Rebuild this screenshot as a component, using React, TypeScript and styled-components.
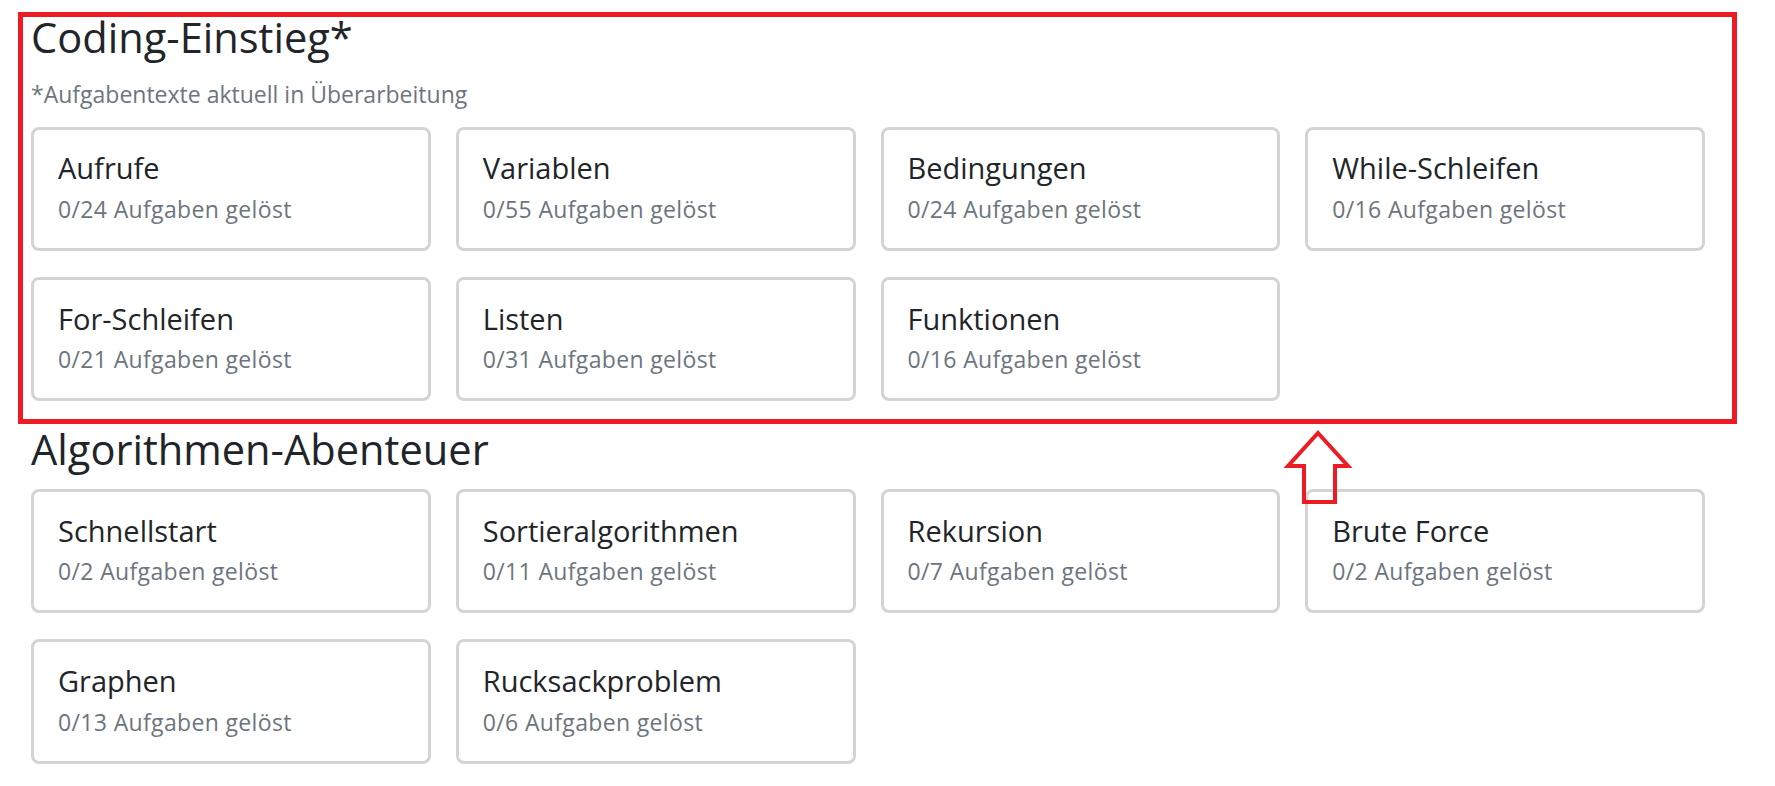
import React from "react";
import styled, { createGlobalStyle } from "styled-components";

const GlobalStyle = createGlobalStyle`
  html, body {
    margin: 0;
    padding: 0;
    background: #ffffff;
  }
  body {
    font-family: "Open Sans", "Noto Sans", "Liberation Sans", sans-serif;
    color: #212529;
  }
  * { box-sizing: border-box; }
`;

const Page = styled.div`
  position: relative;
  padding: 12.5px 70px 24px 31px;
`;

const Section = styled.section<{ $spaced?: boolean }>`
  margin-top: ${(p) => (p.$spaced ? "23.5px" : "0")};
`;

const Heading = styled.h2`
  margin: 0 0 15px;
  font-size: 41.6px;
  font-weight: 400;
  line-height: 49.2px;
  color: #212529;
`;

const Note = styled.p`
  margin: 0 0 15.5px;
  font-size: 23px;
  line-height: 1.5;
  color: #6c757d;
`;

const Grid = styled.div`
  display: grid;
  grid-template-columns: repeat(4, 1fr);
  column-gap: 25px;
  row-gap: 26px;
  width: 1674px;
`;

const Card = styled.a`
  display: flex;
  flex-direction: column;
  gap: 6px;
  padding: 21.5px 24px;
  border: 3px solid #d4d4d4;
  border-radius: 8px;
  text-decoration: none;
  background: #fff;
`;

const CardTitle = styled.div`
  font-size: 29px;
  line-height: 1.2;
  color: #212529;
`;

const CardMeta = styled.div`
  font-size: 23px;
  letter-spacing: 0.35px;
  line-height: 1.5;
  color: #6c757d;
`;

const Highlight = styled.div`
  position: absolute;
  left: 18px;
  top: 12px;
  width: 1719px;
  height: 412px;
  border: 5px solid #ed1c24;
  pointer-events: none;
`;

const ArrowMark = styled.svg`
  position: absolute;
  left: 1280px;
  top: 425px;
  width: 80px;
  height: 85px;
  overflow: visible;
  pointer-events: none;
`;

type Topic = { name: string; total: number };

const coding: Topic[] = [
  { name: "Aufrufe", total: 24 },
  { name: "Variablen", total: 55 },
  { name: "Bedingungen", total: 24 },
  { name: "While-Schleifen", total: 16 },
  { name: "For-Schleifen", total: 21 },
  { name: "Listen", total: 31 },
  { name: "Funktionen", total: 16 },
];

const algo: Topic[] = [
  { name: "Schnellstart", total: 2 },
  { name: "Sortieralgorithmen", total: 11 },
  { name: "Rekursion", total: 7 },
  { name: "Brute Force", total: 2 },
  { name: "Graphen", total: 13 },
  { name: "Rucksackproblem", total: 6 },
];

const TopicGrid = ({ items }: { items: Topic[] }) => (
  <Grid>
    {items.map((t) => (
      <Card key={t.name}>
        <CardTitle>{t.name}</CardTitle>
        <CardMeta>0/{t.total} Aufgaben gelöst</CardMeta>
      </Card>
    ))}
  </Grid>
);

export default function App() {
  return (
    <>
      <GlobalStyle />
      <Page>
        <Section>
          <Heading>Coding-Einstieg*</Heading>
          <Note>*Aufgabentexte aktuell in Überarbeitung</Note>
          <TopicGrid items={coding} />
        </Section>
        <Section $spaced>
          <Heading>Algorithmen-Abenteuer</Heading>
          <TopicGrid items={algo} />
        </Section>
        <Highlight />
        <ArrowMark viewBox="1280 425 80 85">
          <polygon
            points="1318,433 1348,466 1335,466 1335,502 1304,502 1304,466 1288,466"
            fill="none"
            stroke="#ed1c24"
            strokeWidth="4"
            strokeLinejoin="miter"
          />
        </ArrowMark>
      </Page>
    </>
  );
}
